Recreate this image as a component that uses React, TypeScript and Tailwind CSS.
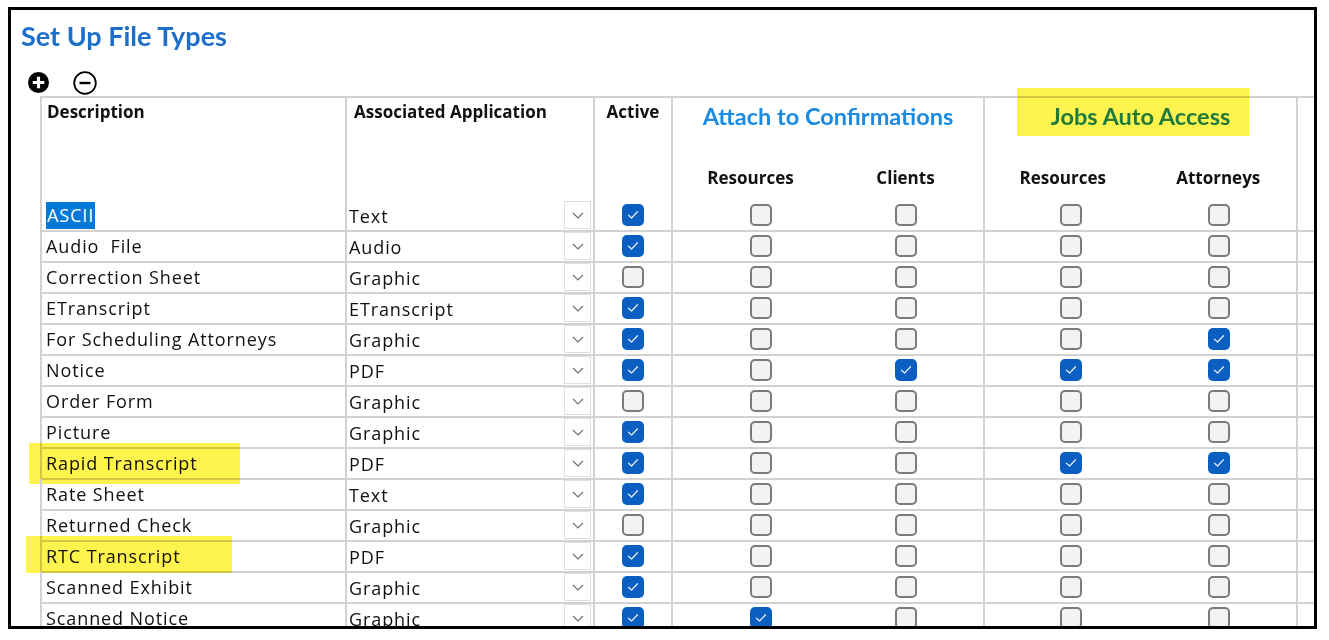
import React from 'react';

interface FileTypeRow {
  name: string;
  app: string;
  active: boolean;
  attachResources: boolean;
  attachClients: boolean;
  jobsResources: boolean;
  jobsAttorneys: boolean;
  highlight?: 'rapid' | 'rtc';
  selected?: boolean;
}

const rows: FileTypeRow[] = [
  { name: 'ASCII', app: 'Text', active: true, attachResources: false, attachClients: false, jobsResources: false, jobsAttorneys: false, selected: true },
  { name: 'Audio  File', app: 'Audio', active: true, attachResources: false, attachClients: false, jobsResources: false, jobsAttorneys: false },
  { name: 'Correction Sheet', app: 'Graphic', active: false, attachResources: false, attachClients: false, jobsResources: false, jobsAttorneys: false },
  { name: 'ETranscript', app: 'ETranscript', active: true, attachResources: false, attachClients: false, jobsResources: false, jobsAttorneys: false },
  { name: 'For Scheduling Attorneys', app: 'Graphic', active: true, attachResources: false, attachClients: false, jobsResources: false, jobsAttorneys: true },
  { name: 'Notice', app: 'PDF', active: true, attachResources: false, attachClients: true, jobsResources: true, jobsAttorneys: true },
  { name: 'Order Form', app: 'Graphic', active: false, attachResources: false, attachClients: false, jobsResources: false, jobsAttorneys: false },
  { name: 'Picture', app: 'Graphic', active: true, attachResources: false, attachClients: false, jobsResources: false, jobsAttorneys: false },
  { name: 'Rapid Transcript', app: 'PDF', active: true, attachResources: false, attachClients: false, jobsResources: true, jobsAttorneys: true, highlight: 'rapid' },
  { name: 'Rate Sheet', app: 'Text', active: true, attachResources: false, attachClients: false, jobsResources: false, jobsAttorneys: false },
  { name: 'Returned Check', app: 'Graphic', active: false, attachResources: false, attachClients: false, jobsResources: false, jobsAttorneys: false },
  { name: 'RTC Transcript', app: 'PDF', active: true, attachResources: false, attachClients: false, jobsResources: false, jobsAttorneys: false, highlight: 'rtc' },
  { name: 'Scanned Exhibit', app: 'Graphic', active: true, attachResources: false, attachClients: false, jobsResources: false, jobsAttorneys: false },
  { name: 'Scanned Notice', app: 'Graphic', active: true, attachResources: true, attachClients: false, jobsResources: false, jobsAttorneys: false },
];

const gridCols = 'grid grid-cols-[307px_248px_78px_156px_156px_156px_157px_1fr]';

function CheckBox({ checked }: { checked: boolean }) {
  if (checked) {
    return (
      <span className="w-[22px] h-[22px] rounded-[5px] bg-[#0b5fc1] flex items-center justify-center">
        <svg width="12" height="10" viewBox="0 0 12 10" fill="none">
          <path d="M1.5 5.2 L4.6 8 L10.5 1.8" stroke="#dfe9f7" strokeWidth="1.3" strokeLinecap="round" strokeLinejoin="round" />
        </svg>
      </span>
    );
  }
  return <span className="w-[22px] h-[22px] rounded-[5px] bg-[#f3f3f3] border-2 border-[#7b7b7b]" />;
}

function Chevron() {
  return (
    <span className="w-[27px] h-[28px] border border-[#dedede] bg-white flex items-center justify-center">
      <svg width="12" height="7" viewBox="0 0 12 7" fill="none">
        <path d="M1 1 L6 6 L11 1" stroke="#707070" strokeWidth="1.2" />
      </svg>
    </span>
  );
}

function CheckCell({ checked, last }: { checked: boolean; last?: boolean }) {
  return (
    <div className={`flex items-center justify-center border-b-2 border-[#d2d2d2] ${last ? 'border-r-2' : ''}`}>
      <CheckBox checked={checked} />
    </div>
  );
}

export default function App() {
  return (
    <div className="w-[1329px] h-[640px] bg-white pt-[7px] pl-[8px] font-['Open_Sans',sans-serif] text-[#111]">
      <div className="w-[1309px] h-[622px] border-[3px] border-black overflow-hidden">
        {/* Title */}
        <h1 className="pl-[10px] pt-[9px] h-[59px] font-['Lato',sans-serif] font-bold text-[27px] leading-[34px] text-[#1d6fc9]">
          Set Up File Types
        </h1>

        {/* Add / remove */}
        <div className="flex items-center gap-[24px] pl-[17px] h-[27px]">
          <svg width="21" height="21" viewBox="0 0 20 20">
            <circle cx="10" cy="10" r="10" fill="#000" />
            <path d="M10 4.5 V15.5 M4.5 10 H15.5" stroke="#fff" strokeWidth="3" />
          </svg>
          <svg width="24" height="24" viewBox="0 0 24 24" fill="none">
            <circle cx="12" cy="12" r="10.8" stroke="#000" strokeWidth="1.8" />
            <path d="M6.5 12 H17.5" stroke="#000" strokeWidth="2.4" />
          </svg>
        </div>

        {/* Grid */}
        <div className="ml-[29px] border-t-2 border-[#d2d2d2]">
          {/* Header */}
          <div className={`${gridCols} h-[102px] font-bold text-[17px]`}>
            <div className="border-l-2 border-r-2 border-[#d2d2d2] pl-[5px] pt-[1px]">Description</div>
            <div className="border-r-2 border-[#d2d2d2] pl-[7px] pt-[1px]">Associated Application</div>
            <div className="border-r-2 border-[#d2d2d2] text-center pt-[1px]">Active</div>
            <div className="col-span-2 border-r-2 border-[#d2d2d2] flex flex-col">
              <div className="text-center font-['Lato',sans-serif] text-[23.5px] text-[#1b8ae3] pt-[1px] h-[67px]">
                Attach to Confirmations
              </div>
              <div className="grid grid-cols-2">
                <span className="text-center">Resources</span>
                <span className="text-center">Clients</span>
              </div>
            </div>
            <div className="col-span-2 border-r-2 border-[#d2d2d2] flex flex-col">
              <div className="relative h-[67px] flex justify-center pt-[1px]">
                <span className="absolute left-[32px] -top-[10px] w-[232px] h-[48px] bg-[#fff34d] mix-blend-multiply" />
                <span className="relative font-['Lato',sans-serif] text-[23.5px] text-[#1f7a3c]">Jobs Auto Access</span>
              </div>
              <div className="grid grid-cols-2">
                <span className="text-center">Resources</span>
                <span className="text-center">Attorneys</span>
              </div>
            </div>
            <div />
          </div>

          {/* Rows */}
          {rows.map((r) => (
            <div key={r.name} className={`${gridCols} h-[31px] text-[18px] tracking-[0.9px]`}>
              <div className="relative border-l-2 border-r-2 border-b-2 border-[#d2d2d2] pl-[4px] flex items-center">
                {r.selected ? (
                  <span className="bg-[#0078d7] text-white px-[1px] leading-[27px]">{r.name}</span>
                ) : (
                  <span className="whitespace-pre">{r.name}</span>
                )}
                {r.highlight === 'rapid' && (
                  <span className="absolute -left-[13px] -top-[5px] w-[211px] h-[41px] bg-[#fff34d] mix-blend-multiply" />
                )}
                {r.highlight === 'rtc' && (
                  <span className="absolute -left-[16px] -top-[5px] w-[206px] h-[37px] bg-[#fff34d] mix-blend-multiply" />
                )}
              </div>
              <div className="border-r-2 border-b-2 border-[#d2d2d2] pl-[2px] pr-[2px] flex items-center justify-between">
                <span className="pt-[3px]">{r.app}</span>
                <Chevron />
              </div>
              <CheckCell checked={r.active} last />
              <div className="border-b-2 border-[#d2d2d2] flex items-center justify-center pl-[20px]">
                <CheckBox checked={r.attachResources} />
              </div>
              <CheckCell checked={r.attachClients} last />
              <div className="border-b-2 border-[#d2d2d2] flex items-center justify-center pl-[16px]">
                <CheckBox checked={r.jobsResources} />
              </div>
              <CheckCell checked={r.jobsAttorneys} last />
              <div className="border-b-2 border-[#d2d2d2]" />
            </div>
          ))}
        </div>
      </div>
    </div>
  );
}
